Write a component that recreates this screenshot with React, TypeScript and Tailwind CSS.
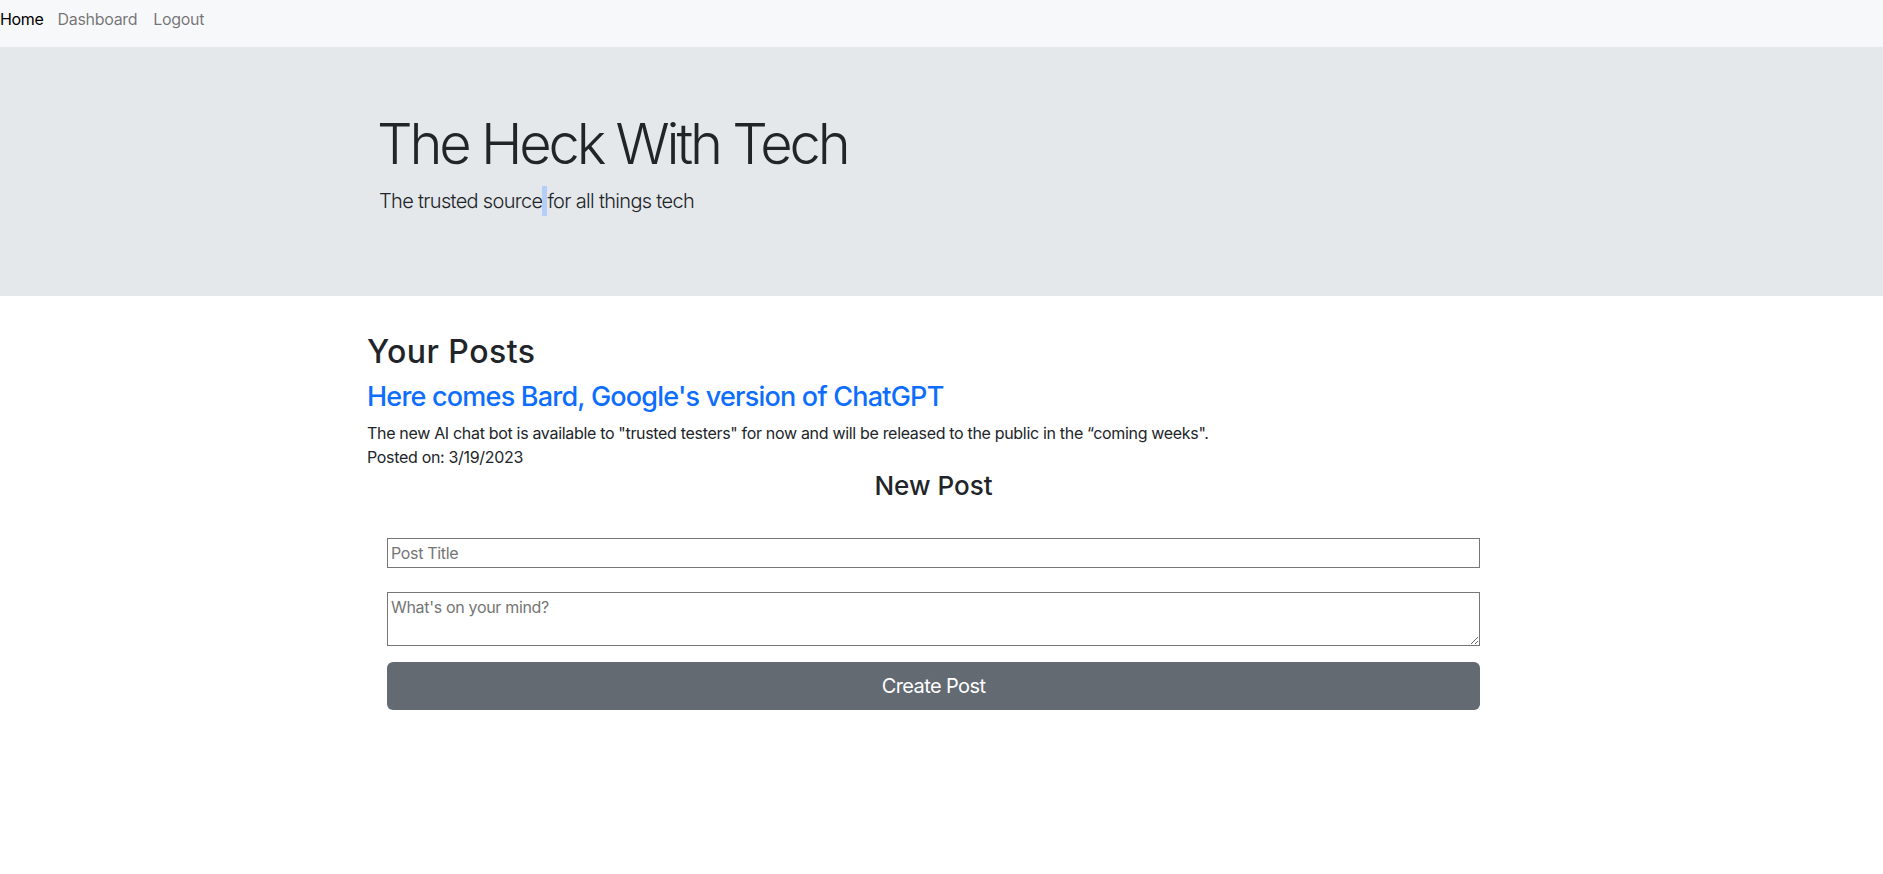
import React from "react";

const navLinks = [
  { label: "Home", active: true },
  { label: "Dashboard", active: false },
  { label: "Logout", active: false },
];

export default function App() {
  return (
    <div className="min-h-screen bg-white font-['Inter','Noto_Sans',sans-serif] text-[#212529]">
      {/* Navbar */}
      <nav className="h-[47px] bg-[#f7f8fa] flex items-start pt-[7px] text-base leading-6 tracking-[-0.02em]">
        {navLinks.map((link, i) => (
          <a
            key={link.label}
            href="#"
            className={`${i === 0 ? "pr-[6px]" : "px-2"} ${
              link.active ? "text-black" : "text-[#0000008c]"
            }`}
          >
            {link.label}
          </a>
        ))}
      </nav>

      {/* Jumbotron */}
      <header className="bg-[#e5e8eb] pt-[64px] pb-[64px]">
        <div className="ml-[379px]">
          <h1 className="ml-[-2px] text-[56px] font-light leading-[67px] tracking-[-0.057em] mb-2">
            The Heck With Tech
          </h1>
          <p className="text-[20px] font-light leading-[30px] tracking-[-0.034em] mb-4">
            The trusted source
            <span className="inline-block w-[5px] h-[30px] align-top bg-[#b3cff7]"></span>
            for all things tech
          </p>
        </div>
      </header>

      {/* Posts */}
      <main className="ml-[367px] w-[1131px] pb-10">
        <h2 className="mt-[37px] text-[32px] font-medium leading-[38px] tracking-[0.015em] mb-[9px]">
          Your Posts
        </h2>
        <div>
          <h3 className="text-[27px] font-medium leading-[34px] tracking-[-0.029em] mb-[7px]">
            <a href="#" className="text-[#0d6efd]">
              Here comes Bard, Google's version of ChatGPT
            </a>
          </h3>
          <p className="text-base leading-6 tracking-[-0.02em]">
            The new AI chat bot is available to "trusted testers" for now and will be released to the public in the “coming weeks".
          </p>
          <p className="text-base leading-6 tracking-[-0.02em]">Posted on: 3/19/2023</p>
        </div>

        {/* New post form */}
        <form className="ml-[20px] w-[1093px]" onSubmit={(e) => e.preventDefault()}>
          <h3 className="mt-[2px] text-center text-[26px] font-medium leading-[30px]">New Post</h3>
          <input
            type="text"
            placeholder="Post Title"
            className="mt-[37px] block w-full h-[30px] border border-[#767676] px-[3px] text-base leading-6 tracking-[-0.02em] placeholder:text-[#757575] outline-none"
          />
          <textarea
            rows={2}
            placeholder="What's on your mind?"
            className="mt-[24px] block w-full h-[54px] border border-[#767676] px-[3px] py-[2px] text-base leading-6 tracking-[-0.02em] placeholder:text-[#757575] outline-none"
          />
          <button
            type="submit"
            className="mt-[16px] block w-full h-[48px] rounded-[6px] bg-[#636a72] text-white text-[20px] leading-[30px] tracking-[-0.03em]"
          >
            Create Post
          </button>
        </form>
      </main>
    </div>
  );
}
